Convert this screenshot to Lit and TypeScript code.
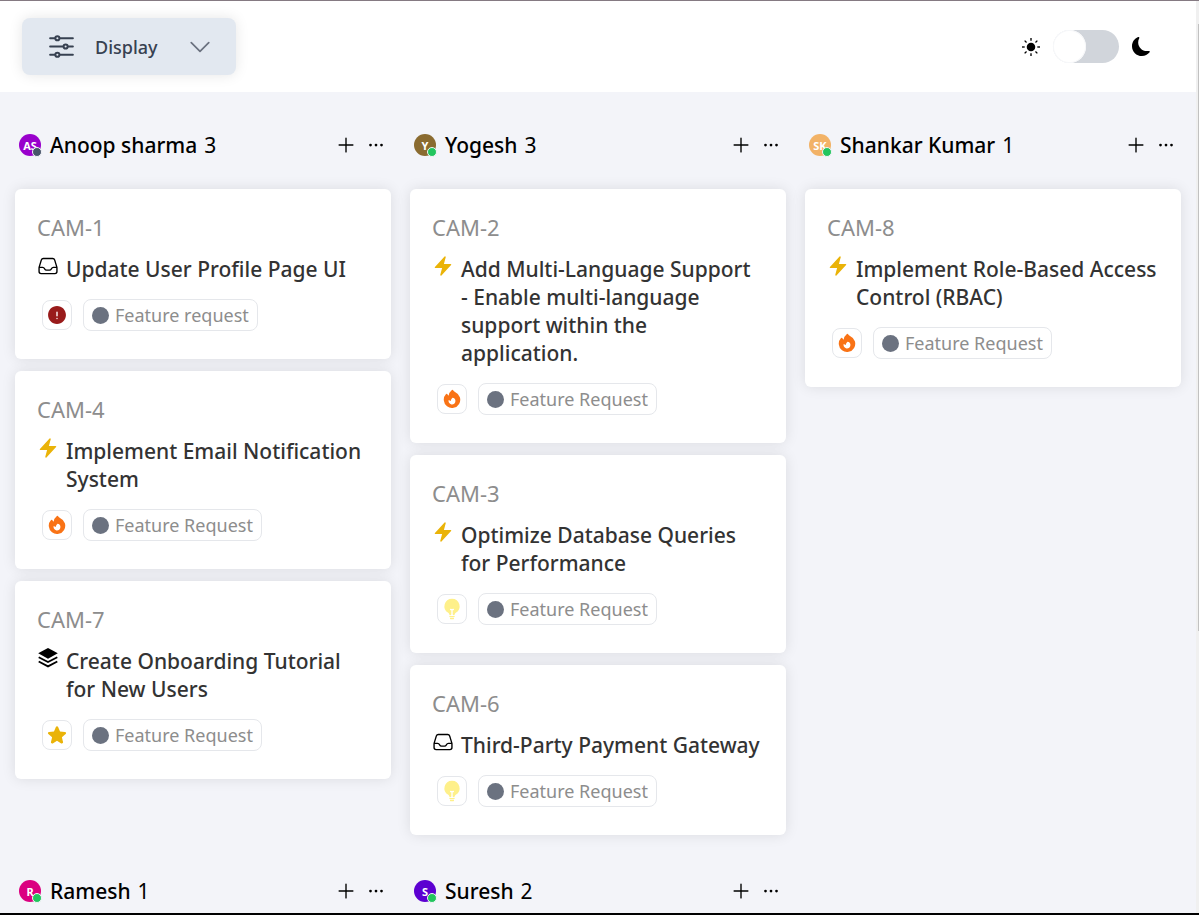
import { LitElement, html, svg, css } from "lit";
import { customElement, property, state } from "lit/decorators.js";
import { styleMap } from "lit/directives/style-map.js";
import { classMap } from "lit/directives/class-map.js";

type IconName =
  | "inbox" | "bolt" | "layers" | "urgent" | "fire" | "bulb" | "star"
  | "sliders" | "chevron" | "plus" | "dots" | "sun" | "moon";

interface Ticket {
  id: string;
  title: string;
  status: IconName;
  priority: IconName;
  tag: string;
}

interface Group {
  name: string;
  initials: string;
  color: string;
  online: boolean;
  count: number;
  tickets: Ticket[];
}

const FR = "Feature Request";

const GROUPS: Group[] = [
  {
    name: "Anoop sharma", initials: "AS", color: "#9900cc", online: false, count: 3,
    tickets: [
      { id: "CAM-1", title: "Update User Profile Page UI", status: "inbox", priority: "urgent", tag: "Feature request" },
      { id: "CAM-4", title: "Implement Email Notification System", status: "bolt", priority: "fire", tag: FR },
      { id: "CAM-7", title: "Create Onboarding Tutorial for New Users", status: "layers", priority: "star", tag: FR },
    ],
  },
  {
    name: "Yogesh", initials: "Y", color: "#8a6b30", online: true, count: 3,
    tickets: [
      { id: "CAM-2", title: "Add Multi-Language Support - Enable multi-language support within the application.", status: "bolt", priority: "fire", tag: FR },
      { id: "CAM-3", title: "Optimize Database Queries for Performance", status: "bolt", priority: "bulb", tag: FR },
      { id: "CAM-6", title: "Third-Party Payment Gateway", status: "inbox", priority: "bulb", tag: FR },
    ],
  },
  {
    name: "Shankar Kumar", initials: "SK", color: "#f2b267", online: true, count: 1,
    tickets: [
      { id: "CAM-8", title: "Implement Role-Based Access Control (RBAC)", status: "bolt", priority: "fire", tag: FR },
    ],
  },
  { name: "Ramesh", initials: "R", color: "#db0080", online: true, count: 1, tickets: [] },
  { name: "Suresh", initials: "S", color: "#5c00d1", online: true, count: 2, tickets: [] },
];

const OUTLINE: Partial<Record<IconName, string>> = {
  inbox: "M2.25 13.5h3.86a2.25 2.25 0 012.012 1.244l.256.512a2.25 2.25 0 002.013 1.244h3.218a2.25 2.25 0 002.013-1.244l.256-.512a2.25 2.25 0 012.013-1.244h3.859m-19.5.338V18a2.25 2.25 0 002.25 2.25h15A2.25 2.25 0 0021.75 18v-4.162c0-.224-.034-.447-.1-.661L19.24 5.338a2.25 2.25 0 00-2.15-1.588H6.911a2.25 2.25 0 00-2.15 1.588L2.35 13.177a2.25 2.25 0 00-.1.661z",
  sliders: "M10.5 6h9.75M10.5 6a1.5 1.5 0 11-3 0m3 0a1.5 1.5 0 10-3 0M3.75 6H7.5m3 12h9.75m-9.75 0a1.5 1.5 0 01-3 0m3 0a1.5 1.5 0 00-3 0m-3.75 0H7.5m9-6h3.75m-3.75 0a1.5 1.5 0 01-3 0m3 0a1.5 1.5 0 00-3 0m-9.75 0h9.75",
  chevron: "M19.5 8.25l-7.5 7.5-7.5-7.5",
  plus: "M12 4.5v15m7.5-7.5h-15",
  dots: "M6.75 12a.75.75 0 11-1.5 0 .75.75 0 011.5 0zM12.75 12a.75.75 0 11-1.5 0 .75.75 0 011.5 0zM18.75 12a.75.75 0 11-1.5 0 .75.75 0 011.5 0z",
};

const SOLID: Partial<Record<IconName, string>> = {
  bolt: "M14.615 1.595a.75.75 0 01.359.852L12.982 9.75h7.268a.75.75 0 01.548 1.262l-10.5 11.25a.75.75 0 01-1.272-.71l1.992-7.302H3.75a.75.75 0 01-.548-1.262l10.5-11.25a.75.75 0 01.913-.143z",
  urgent: "M2.25 12c0-5.385 4.365-9.75 9.75-9.75s9.75 4.365 9.75 9.75-4.365 9.75-9.75 9.75S2.25 17.385 2.25 12zM12 8.25a.75.75 0 01.75.75v3.75a.75.75 0 01-1.5 0V9a.75.75 0 01.75-.75zm0 8.25a.75.75 0 100-1.5.75.75 0 000 1.5z",
  fire: "M12.963 2.286a.75.75 0 00-1.071-.136 9.742 9.742 0 00-3.539 6.177A7.547 7.547 0 016.648 6.61a.75.75 0 00-1.152-.082A9 9 0 1015.68 4.534a7.46 7.46 0 01-2.717-2.248zM15.75 14.25a3.75 3.75 0 11-7.313-1.172c.628.465 1.35.81 2.133 1a5.99 5.99 0 011.925-3.545 3.75 3.75 0 013.255 3.717z",
  star: "M10.788 3.21c.448-1.077 1.976-1.077 2.424 0l2.082 5.007 5.404.433c1.164.093 1.636 1.545.749 2.305l-4.117 3.527 1.257 5.273c.271 1.136-.964 2.033-1.96 1.425L12 18.354 7.373 21.18c-.996.608-2.231-.29-1.96-1.425l1.257-5.273-4.117-3.527c-.887-.76-.415-2.212.749-2.305l5.404-.433 2.082-5.006z",
  bulb: "M12 .75a8.25 8.25 0 00-4.135 15.39c.686.398 1.115 1.008 1.134 1.623a.75.75 0 00.577.706c.352.083.71.148 1.074.195.323.041.6-.218.6-.544v-4.661a6.714 6.714 0 01-.937-.171.75.75 0 11.374-1.453 5.261 5.261 0 002.626 0 .75.75 0 11.374 1.452 6.712 6.712 0 01-.937.172v4.66c0 .327.277.586.6.545.364-.047.722-.112 1.074-.195a.75.75 0 00.577-.706c.02-.615.448-1.225 1.134-1.623A8.25 8.25 0 0012 .75zM9.013 19.9a.75.75 0 01.877-.597 11.319 11.319 0 004.22 0 .75.75 0 11.28 1.473 12.819 12.819 0 01-4.78 0 .75.75 0 01-.597-.876zM9.754 22.344a.75.75 0 01.824-.668 13.682 13.682 0 002.844 0 .75.75 0 11.156 1.492 15.156 15.156 0 01-3.156 0 .75.75 0 01-.668-.824z",
};

@customElement("ui-icon")
class UiIcon extends LitElement {
  @property() name: IconName = "plus";

  static styles = css`
    :host { display: block; width: 22px; height: 22px; flex: none; }
    svg { display: block; width: 100%; height: 100%; }
  `;

  render() {
    if (this.name === "sun") {
      return html`<svg viewBox="0 0 16 16" fill="none" stroke="currentColor" stroke-width="1.2" aria-hidden="true">
        <circle cx="8" cy="8" r="3.8" fill="currentColor" stroke="none" />
        ${[0, 45, 90, 135, 180, 225, 270, 315].map(
          (a) => svg`<path d="M8 0v2.4" transform="rotate(${a} 8 8)" />`
        )}
      </svg>`;
    }
    if (this.name === "moon") {
      return html`<svg viewBox="0 0 16 16" fill="currentColor" aria-hidden="true">
        <path d="M6 .278a.768.768 0 0 1 .08.858 7.208 7.208 0 0 0-.878 3.46c0 4.021 3.278 7.277 7.318 7.277.527 0 1.04-.055 1.533-.16a.787.787 0 0 1 .81.316.733.733 0 0 1-.031.893A8.349 8.349 0 0 1 8.344 16C3.734 16 0 12.286 0 7.71 0 4.266 2.114 1.312 5.124.06A.752.752 0 0 1 6 .278z" />
      </svg>`;
    }
    if (this.name === "layers") {
      return html`<svg viewBox="-1 -1 22 22" aria-hidden="true">
        <path fill="currentColor" d="M10 0l9.8 5.3L10 10.8.2 5.3z" />
        <path fill="none" stroke="currentColor" stroke-width="1.8" d="M.7 9.2L10 14l9.3-4.8M.7 13.5L10 18.4l9.3-4.9" />
      </svg>`;
    }
    const line = OUTLINE[this.name];
    return line
      ? html`<svg viewBox="0 0 24 24" fill="none" stroke="currentColor" stroke-width="1.5" stroke-linecap="round" stroke-linejoin="round" aria-hidden="true"><path d=${line} /></svg>`
      : html`<svg viewBox="0 0 24 24" fill="currentColor" fill-rule="evenodd" aria-hidden="true"><path fill-rule="evenodd" d=${SOLID[this.name] ?? ""} /></svg>`;
  }
}

@customElement("ticket-card")
class TicketCard extends LitElement {
  @property({ attribute: false }) ticket!: Ticket;

  static styles = css`
    :host { display: block; }
    .card {
      padding: 22px 24px 28px 22px;
      border-radius: 6px;
      background: #fff;
      box-shadow: 0 0 14px rgba(0, 0, 0, 0.1);
    }
    .id { font-size: 22px; line-height: 33px; color: #8d8d8d; }
    .title-row { display: flex; gap: 7px; margin-top: 11px; }
    .title { margin: 0; font-size: 21px; line-height: 28px; font-weight: 500; color: #333; }
    .chips { display: flex; align-items: center; gap: 11px; margin: 16px 0 0 5px; }
    .chip {
      box-sizing: border-box;
      display: flex;
      align-items: center;
      border: 1px solid #e5e7eb;
      border-radius: 8px;
    }
    .priority { width: 30px; height: 30px; justify-content: center; }
    .tag { height: 32px; gap: 6px; padding: 0 8px; font-size: 18px; color: #8d8d8d; }
    .dot { width: 17px; height: 17px; border-radius: 50%; background: #6b7280; }
    .inbox, .layers { color: #000; }
    .bolt, .star { color: #eab308; }
    .urgent { color: #991b1b; }
    .fire { color: #f97316; }
    .bulb { color: #fef08a; }
  `;

  render() {
    const t = this.ticket;
    return html`<article class="card">
      <div class="id">${t.id}</div>
      <div class="title-row">
        <ui-icon class=${classMap({ [t.status]: true })} name=${t.status}></ui-icon>
        <h3 class="title">${t.title}</h3>
      </div>
      <div class="chips">
        <span class="chip priority"><ui-icon class=${classMap({ [t.priority]: true })} name=${t.priority}></ui-icon></span>
        <span class="chip tag"><span class="dot"></span>${t.tag}</span>
      </div>
    </article>`;
  }
}

@customElement("ticket-group")
class TicketGroup extends LitElement {
  @property({ attribute: false }) group!: Group;

  static styles = css`
    :host { display: block; min-width: 0; }
    .head { display: flex; align-items: center; gap: 9px; height: 44px; padding: 0 4px; color: #000; }
    .avatar {
      position: relative;
      display: grid;
      place-items: center;
      width: 22px;
      height: 22px;
      border-radius: 50%;
      color: #fff;
      font-size: 11px;
      font-weight: 700;
    }
    .presence {
      position: absolute;
      right: -1px;
      bottom: -1px;
      width: 8px;
      height: 8px;
      border: 1px solid #f3f4f9;
      border-radius: 50%;
      background: #475569;
    }
    .online { background: #22c55e; }
    .label { display: flex; gap: 7px; font-size: 21px; line-height: 28px; }
    .name { margin: 0; font-size: inherit; font-weight: 500; }
    .actions { display: flex; gap: 8px; margin-left: auto; }
    .action { padding: 0; border: 0; background: none; color: inherit; cursor: pointer; }
    .list { display: flex; flex-direction: column; gap: 12px; margin-top: 22px; }
  `;

  render() {
    const g = this.group;
    return html`<section>
      <header class="head">
        <span class="avatar" style=${styleMap({ background: g.color })}>${g.initials}<span class=${classMap({ presence: true, online: g.online })}></span></span>
        <div class="label">
          <h2 class="name">${g.name}</h2>
          <span>${g.count}</span>
        </div>
        <div class="actions">
          <button class="action" aria-label="Add ticket"><ui-icon name="plus"></ui-icon></button>
          <button class="action" aria-label="More options"><ui-icon name="dots"></ui-icon></button>
        </div>
      </header>
      <div class="list">${g.tickets.map((t) => html`<ticket-card .ticket=${t}></ticket-card>`)}</div>
    </section>`;
  }
}

@customElement("app-root")
class AppRoot extends LitElement {
  @state() private dark = false;

  static styles = css`
    :host {
      box-sizing: border-box;
      display: flex;
      height: 100vh;
      overflow: hidden;
      border-top: 1px solid #857a82;
      border-bottom: 2px solid #000;
      background: #f3f4f9;
      font-family: "Segoe UI", "Noto Sans", "Open Sans", sans-serif;
    }
    .page { flex: 1; min-width: 0; overflow: hidden; }
    .bar {
      display: flex;
      align-items: center;
      justify-content: space-between;
      padding: 17px 45px 17px 22px;
      background: #fff;
    }
    .display {
      display: flex;
      align-items: center;
      height: 57px;
      padding: 0 22px 0 23px;
      border: 0;
      border-radius: 8px;
      background: #e2e8f0;
      box-shadow: 0 0 14px rgba(0, 0, 0, 0.1);
      color: #374151;
      font: 500 18px/28px "Segoe UI", "Noto Sans", "Open Sans", sans-serif;
      cursor: pointer;
    }
    .sliders { width: 33px; height: 33px; margin-right: 17px; }
    .chevron { width: 28px; height: 28px; margin-left: 28px; color: #6b7280; }
    .theme { display: flex; align-items: center; gap: 13px; color: #000; }
    .sun { width: 18px; height: 18px; }
    .moon { width: 19px; height: 19px; }
    .toggle {
      appearance: none;
      width: 66px;
      height: 33px;
      margin: 0;
      border-radius: 17px;
      background: #d1d5db;
      cursor: pointer;
    }
    .toggle::before {
      content: "";
      display: block;
      width: 33px;
      height: 33px;
      border-radius: 50%;
      background: #fff;
      box-shadow: inset 0 0 0 1px #f6f7f9;
    }
    .toggle:checked::before { margin-left: auto; }
    .board {
      display: grid;
      grid-template-columns: repeat(3, minmax(0, 1fr));
      gap: 34px 19px;
      padding: 31px 15px;
    }
    .track {
      display: grid;
      grid-template-rows: 23px 607fr 282fr;
      width: 3px;
      background: #f0f0f0;
    }
    .thumb { grid-row: 2; margin-left: 2px; background: #c1c1c1; }
  `;

  render() {
    return html`
      <div class="page">
        <header class="bar">
          <button class="display">
            <ui-icon class="sliders" name="sliders"></ui-icon>Display<ui-icon class="chevron" name="chevron"></ui-icon>
          </button>
          <div class="theme">
            <ui-icon class="sun" name="sun"></ui-icon>
            <input
              class="toggle"
              type="checkbox"
              role="switch"
              aria-label="Dark theme"
              .checked=${this.dark}
              @change=${(e: Event) => (this.dark = (e.target as HTMLInputElement).checked)}
            />
            <ui-icon class="moon" name="moon"></ui-icon>
          </div>
        </header>
        <main class="board">${GROUPS.map((g) => html`<ticket-group .group=${g}></ticket-group>`)}</main>
      </div>
      <div class="track"><div class="thumb"></div></div>
    `;
  }
}
